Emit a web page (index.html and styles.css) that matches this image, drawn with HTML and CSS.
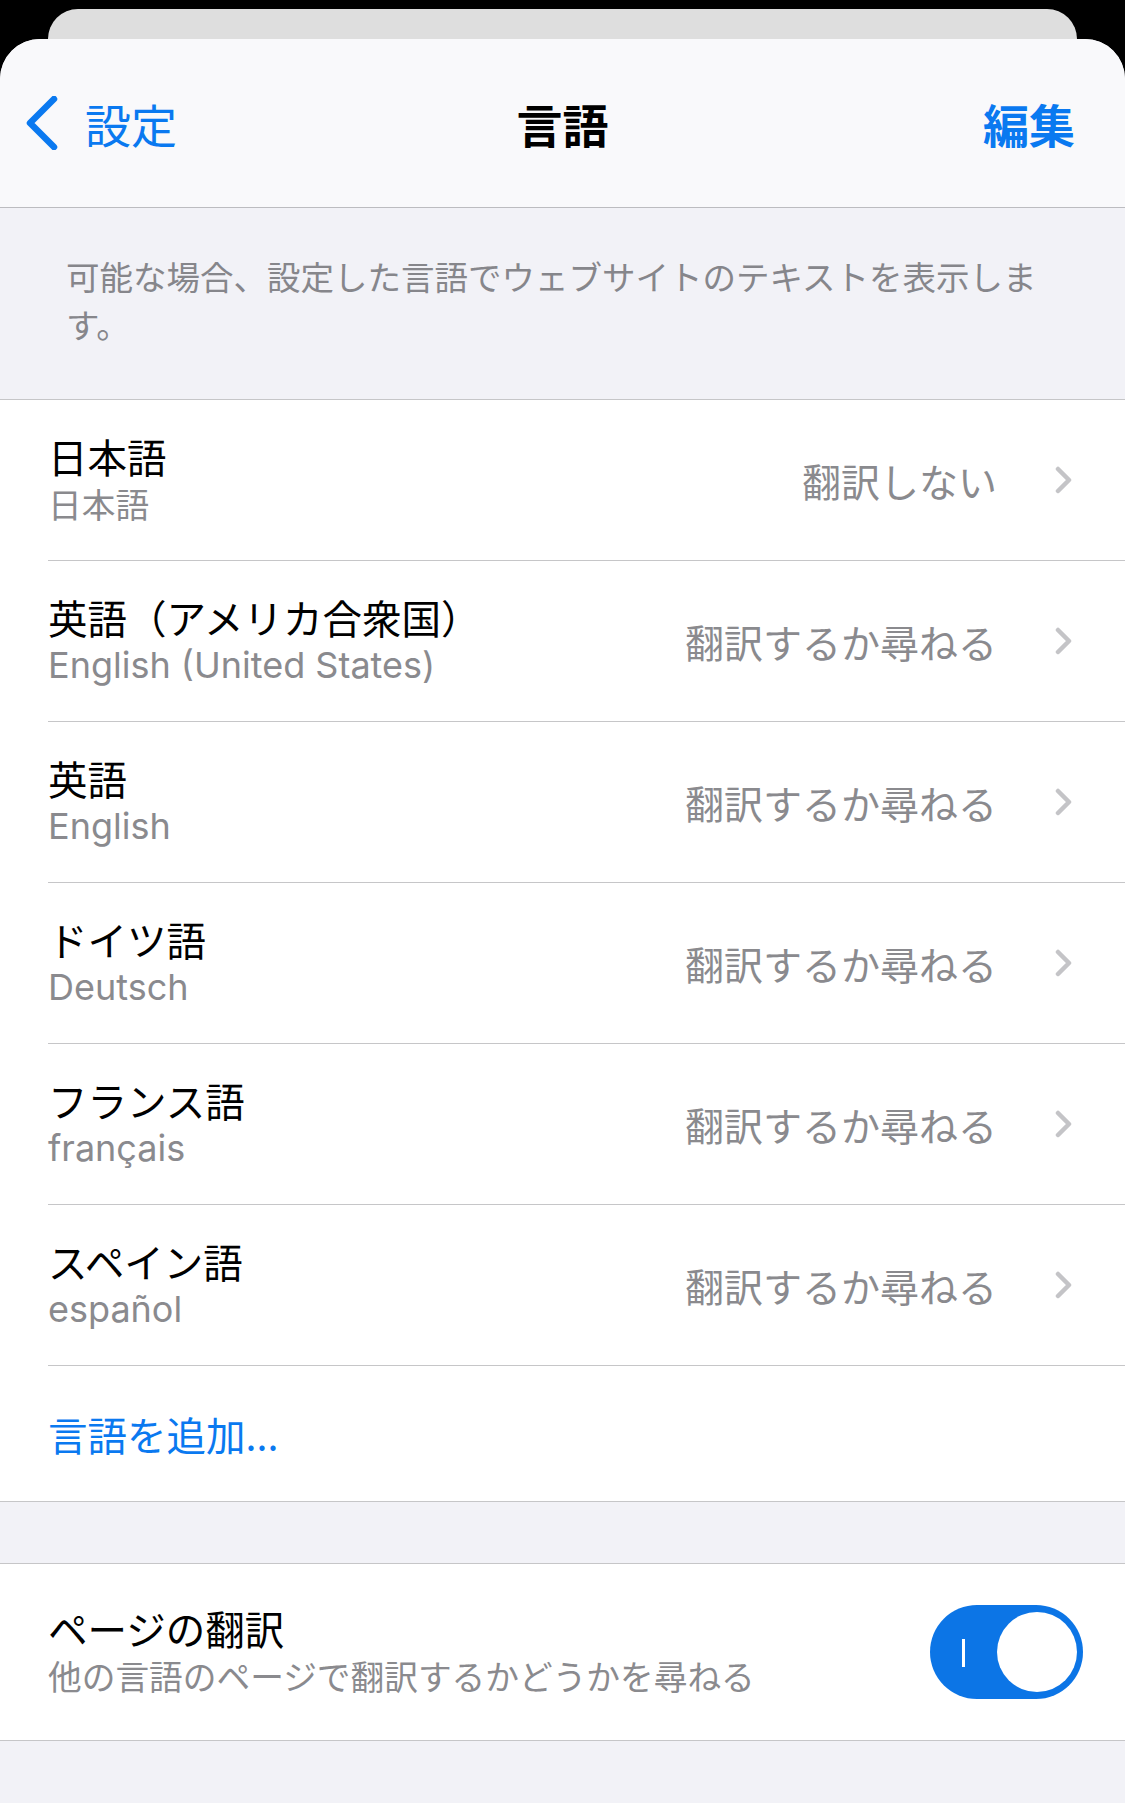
FILE: index.html
```html
<!DOCTYPE html>
<html lang="ja">
<head>
    <meta charset="UTF-8">
    <meta name="viewport" content="width=device-width, initial-scale=1.0">
    <title>言語</title>
    <link rel="stylesheet" href="styles.css">
</head>
<body>
    <div class="back-card"></div>
    <div class="sheet">
        <header class="nav">
            <a class="nav-back">
                <svg class="back-icon" viewBox="0 0 34 54" width="34" height="54">
                    <polyline points="29,3 5,27 29,51" fill="none" stroke="currentColor" stroke-width="6.5" stroke-linecap="round" stroke-linejoin="round"/>
                </svg>
                <span>設定</span>
            </a>
            <h1 class="nav-title">言語</h1>
            <a class="nav-edit">編集</a>
        </header>

        <p class="group-note">可能な場合、設定した言語でウェブサイトのテキストを表示します。</p>

        <ul class="group lang-list">
            <li class="row">
                <div class="row-inner">
                    <div class="names">
                        <span class="name">日本語</span>
                        <span class="native native-ja">日本語</span>
                    </div>
                    <span class="mode">翻訳しない</span>
                    <svg class="chevron" viewBox="0 0 18 28" width="18" height="28"><polyline points="3,3 14,14 3,25" fill="none" stroke="currentColor" stroke-width="4.5" stroke-linecap="round" stroke-linejoin="round"/></svg>
                </div>
            </li>
            <li class="row">
                <div class="row-inner">
                    <div class="names">
                        <span class="name">英語（アメリカ合衆国）</span>
                        <span class="native">English (United States)</span>
                    </div>
                    <span class="mode">翻訳するか尋ねる</span>
                    <svg class="chevron" viewBox="0 0 18 28" width="18" height="28"><polyline points="3,3 14,14 3,25" fill="none" stroke="currentColor" stroke-width="4.5" stroke-linecap="round" stroke-linejoin="round"/></svg>
                </div>
            </li>
            <li class="row">
                <div class="row-inner">
                    <div class="names">
                        <span class="name">英語</span>
                        <span class="native">English</span>
                    </div>
                    <span class="mode">翻訳するか尋ねる</span>
                    <svg class="chevron" viewBox="0 0 18 28" width="18" height="28"><polyline points="3,3 14,14 3,25" fill="none" stroke="currentColor" stroke-width="4.5" stroke-linecap="round" stroke-linejoin="round"/></svg>
                </div>
            </li>
            <li class="row">
                <div class="row-inner">
                    <div class="names">
                        <span class="name">ドイツ語</span>
                        <span class="native">Deutsch</span>
                    </div>
                    <span class="mode">翻訳するか尋ねる</span>
                    <svg class="chevron" viewBox="0 0 18 28" width="18" height="28"><polyline points="3,3 14,14 3,25" fill="none" stroke="currentColor" stroke-width="4.5" stroke-linecap="round" stroke-linejoin="round"/></svg>
                </div>
            </li>
            <li class="row">
                <div class="row-inner">
                    <div class="names">
                        <span class="name">フランス語</span>
                        <span class="native">français</span>
                    </div>
                    <span class="mode">翻訳するか尋ねる</span>
                    <svg class="chevron" viewBox="0 0 18 28" width="18" height="28"><polyline points="3,3 14,14 3,25" fill="none" stroke="currentColor" stroke-width="4.5" stroke-linecap="round" stroke-linejoin="round"/></svg>
                </div>
            </li>
            <li class="row">
                <div class="row-inner">
                    <div class="names">
                        <span class="name">スペイン語</span>
                        <span class="native">español</span>
                    </div>
                    <span class="mode">翻訳するか尋ねる</span>
                    <svg class="chevron" viewBox="0 0 18 28" width="18" height="28"><polyline points="3,3 14,14 3,25" fill="none" stroke="currentColor" stroke-width="4.5" stroke-linecap="round" stroke-linejoin="round"/></svg>
                </div>
            </li>
            <li class="row row-add">
                <div class="row-inner">
                    <a class="add-link">言語を追加...</a>
                </div>
            </li>
        </ul>

        <ul class="group toggle-group">
            <li class="row row-toggle">
                <div class="row-inner">
                    <div class="names">
                        <span class="name">ページの翻訳</span>
                        <span class="native native-ja">他の言語のページで翻訳するかどうかを尋ねる</span>
                    </div>
                    <span class="switch"><span class="switch-mark"></span><span class="switch-knob"></span></span>
                </div>
            </li>
        </ul>
    </div>
</body>
</html>
```

FILE: styles.css
```css
body {
    margin: 0;
    background-color: #000;
    font-family: "Noto Sans CJK JP", Inter, sans-serif;
    color: #000;
}
.back-card {
    height: 30px;
    margin: 9px 48px 0;
    background-color: #dedede;
    border-radius: 30px 30px 0 0;
}
.sheet {
    min-height: calc(100vh - 39px);
    background-color: #f2f2f7;
    border-radius: 40px 40px 0 0;
    overflow: hidden;
}
.nav {
    height: 168px;
    display: grid;
    grid-template-columns: 1fr auto 1fr;
    align-items: center;
    background-color: #f9f9fb;
    border-bottom: 1px solid #bcbcc0;
}
.nav-back {
    display: flex;
    align-items: center;
    gap: 26px;
    padding-left: 25px;
    color: #0a79f0;
    font-size: 46px;
}
.back-icon {
    display: block;
}
.nav-title {
    margin: 0;
    font-size: 46px;
    font-weight: 700;
}
.nav-edit {
    justify-self: end;
    padding-right: 50px;
    color: #0a79f0;
    font-size: 46px;
    font-weight: 700;
}
.group-note {
    margin: 0;
    height: 191px;
    box-sizing: border-box;
    padding: 44px 66px 0;
    font-size: 33.5px;
    line-height: 48px;
    color: #86868b;
}
.group {
    list-style: none;
    margin: 0;
    padding: 0;
    background-color: #fff;
    border-top: 1px solid #c6c6c8;
    border-bottom: 1px solid #c6c6c8;
}
.row {
    padding-left: 48px;
}
.row-inner {
    height: 160px;
    display: flex;
    align-items: center;
    padding-right: 52px;
    border-bottom: 1px solid #c6c6c8;
}
.row:last-child .row-inner {
    border-bottom: none;
}
.names {
    flex: 1;
    display: flex;
    flex-direction: column;
    gap: 2px;
}
.name {
    font-size: 39.5px;
    line-height: 46px;
}
.native {
    font-family: Inter, "Noto Sans CJK JP", sans-serif;
    font-size: 36px;
    line-height: 46px;
    color: #8a8a8e;
}
.native-ja {
    font-family: "Noto Sans CJK JP", sans-serif;
    font-size: 33.7px;
}
.mode {
    font-size: 39px;
    color: #8a8a8e;
    margin-right: 58px;
}
.chevron {
    display: block;
    color: #c4c4c7;
}
.row-add .row-inner {
    height: 135px;
}
.add-link {
    font-family: "Noto Sans CJK JP", sans-serif;
    font-size: 39.5px;
    color: #0a79f0;
}
.toggle-group {
    margin-top: 61px;
}
.row-toggle .row-inner {
    height: 176px;
    padding-right: 42px;
}
.switch {
    position: relative;
    width: 153px;
    height: 94px;
    border-radius: 47px;
    background-color: #0c75e6;
}
.switch-mark {
    position: absolute;
    left: 32px;
    top: 34px;
    width: 3px;
    height: 28px;
    background-color: #fff;
}
.switch-knob {
    position: absolute;
    right: 6px;
    top: 7px;
    width: 80px;
    height: 80px;
    border-radius: 50%;
    background-color: #fff;
}
```
